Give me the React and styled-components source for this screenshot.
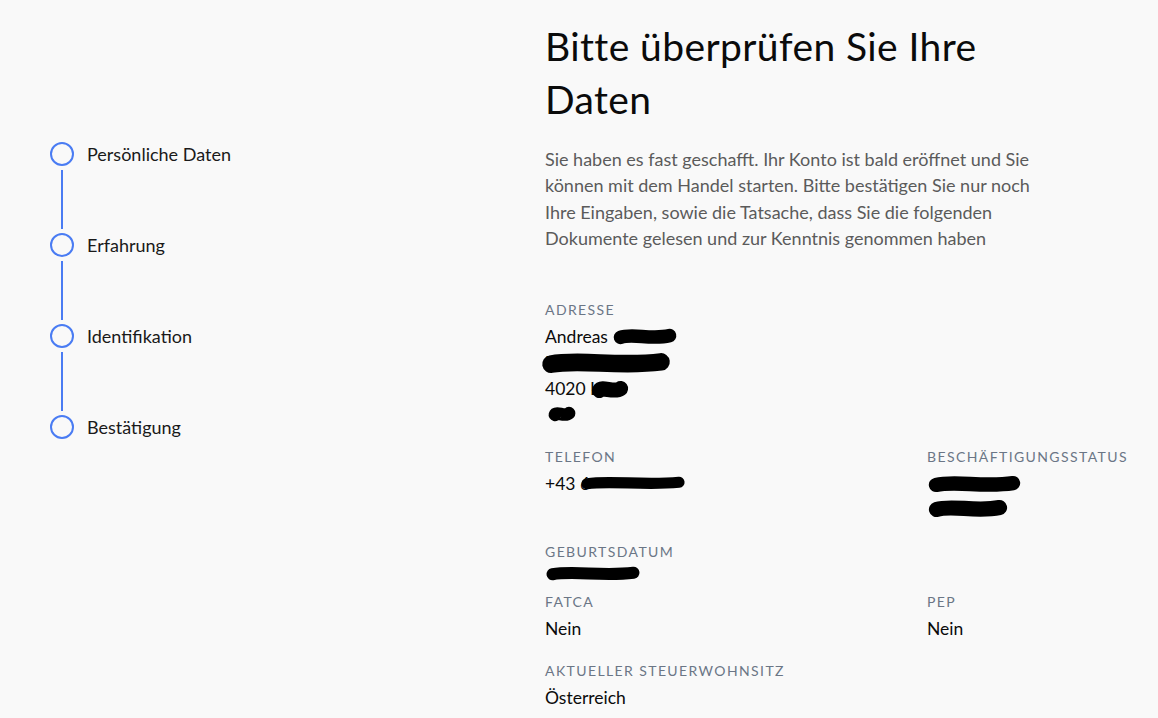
import React from "react";
import styled, { createGlobalStyle } from "styled-components";

const GlobalStyle = createGlobalStyle`
  html, body {
    margin: 0;
    padding: 0;
    background: #f9f9f9;
  }
  body {
    font-family: Lato, "Open Sans", sans-serif;
    color: #111;
  }
`;

const steps = ["Persönliche Daten", "Erfahrung", "Identifikation", "Bestätigung"];

// black marker scribble used to hide personal data
const Blob = ({ w, h, dx = 0, dy = 0 }) => (
  <BlobSvg width={w} height={h} viewBox={`0 0 ${w} ${h}`} style={{ left: dx, top: dy }}>
    <path
      d={`M${h / 2} ${h * 0.55} C ${w * 0.3} ${h * 0.3}, ${w * 0.6} ${h * 0.7}, ${w - h / 2} ${h * 0.45}`}
      stroke="#000"
      strokeWidth={h * 0.8}
      strokeLinecap="round"
      fill="none"
    />
  </BlobSvg>
);

const App = () => (
  <React.Fragment>
    <GlobalStyle />
    <Page>
      <Sidebar>
        {steps.map((s, i) => (
          <Step key={s}>
            <StepRow>
              <Circle />
              <StepLabel>{s}</StepLabel>
            </StepRow>
            {i < steps.length - 1 && <Connector />}
          </Step>
        ))}
      </Sidebar>
      <Main>
        <Title>Bitte überprüfen Sie Ihre Daten</Title>
        <Intro>
          Sie haben es fast geschafft. Ihr Konto ist bald eröffnet und Sie können mit dem Handel
          starten. Bitte bestätigen Sie nur noch Ihre Eingaben, sowie die Tatsache, dass Sie die
          folgenden Dokumente gelesen und zur Kenntnis genommen haben
        </Intro>
        <Fields>
          <Field $full>
            <Label>Adresse</Label>
            <Value>
              Andreas
              <Blob w={66} h={17} dx={67} dy={4} />
            </Value>
            <Value>
              D
              <Blob w={132} h={22} dx={-5} dy={2} />
            </Value>
            <Value>
              4020 L
              <Blob w={40} h={19} dx={45} dy={4} />
            </Value>
            <Value>
              <Blob w={30} h={16} dx={2} dy={4} />
            </Value>
          </Field>
          <Field>
            <Label>Telefon</Label>
            <Value>
              +43 6
              <Blob w={106} h={14} dx={35} dy={5} />
            </Value>
          </Field>
          <Field>
            <Label>Beschäftigungsstatus</Label>
            <Value>
              <Blob w={95} h={18} dx={0} dy={4} />
            </Value>
            <Value>
              <Blob w={82} h={19} dx={0} dy={2} />
            </Value>
          </Field>
          <Field $full $tight>
            <Label>Geburtsdatum</Label>
            <Value>
              <Blob w={96} h={15} dx={0} dy={0} />
            </Value>
          </Field>
          <Field>
            <Label>FATCA</Label>
            <Value $loose>Nein</Value>
          </Field>
          <Field>
            <Label>PEP</Label>
            <Value $loose>Nein</Value>
          </Field>
          <Field $full>
            <Label>Aktueller Steuerwohnsitz</Label>
            <Value>Österreich</Value>
          </Field>
        </Fields>
      </Main>
    </Page>
  </React.Fragment>
);

export default App;

const Page = styled.div`
  display: flex;
  min-height: 718px;
`;

const Sidebar = styled.div`
  width: 495px;
  padding: 142px 0 0 50px;
  box-sizing: border-box;
`;

const Step = styled.div`
  display: flex;
  flex-direction: column;
`;

const StepRow = styled.div`
  display: flex;
  align-items: center;
  height: 24px;
`;

const Circle = styled.span`
  width: 24px;
  height: 24px;
  box-sizing: border-box;
  border: 2px solid #4a7cf3;
  border-radius: 50%;
  flex-shrink: 0;
`;

const StepLabel = styled.span`
  margin-left: 13px;
  font-size: 18px;
  color: #1a1a1a;
`;

const Connector = styled.span`
  width: 2px;
  height: 59px;
  margin: 4px 0 4px 11px;
  background: #4a7cf3;
`;

const Main = styled.div`
  width: 613px;
  padding: 20px 0 0 50px;
`;

const Title = styled.h1`
  margin: 0;
  width: 480px;
  font-family: Lato, sans-serif;
  font-weight: 400;
  font-size: 39px;
  letter-spacing: 0.4px;
  line-height: 53px;
  color: #0b0b0b;
`;

const Intro = styled.p`
  margin: 20px 0 0;
  width: 492px;
  font-size: 18px;
  line-height: 26.3px;
  color: #5b5b5b;
`;

const Fields = styled.div`
  display: grid;
  grid-template-columns: 382px 1fr;
  margin-top: 49px;
`;

const Field = styled.div`
  grid-column: ${(p) => (p.$full ? "1 / -1" : "auto")};
  margin-bottom: ${(p) => (p.$tight ? "0" : "19px")};
`;

const Label = styled.div`
  font-size: 14px;
  line-height: 20px;
  margin-bottom: 4px;
  letter-spacing: 1.4px;
  text-transform: uppercase;
  color: #6b7686;
  white-space: nowrap;
`;

const Value = styled.div`
  position: relative;
  font-size: 17.5px;
  line-height: 26px;
  height: 26px;
  margin-top: ${(p) => (p.$loose ? "2px" : "0")};
  color: #0b0b0b;
`;

const BlobSvg = styled.svg`
  position: absolute;
  overflow: visible;
`;
